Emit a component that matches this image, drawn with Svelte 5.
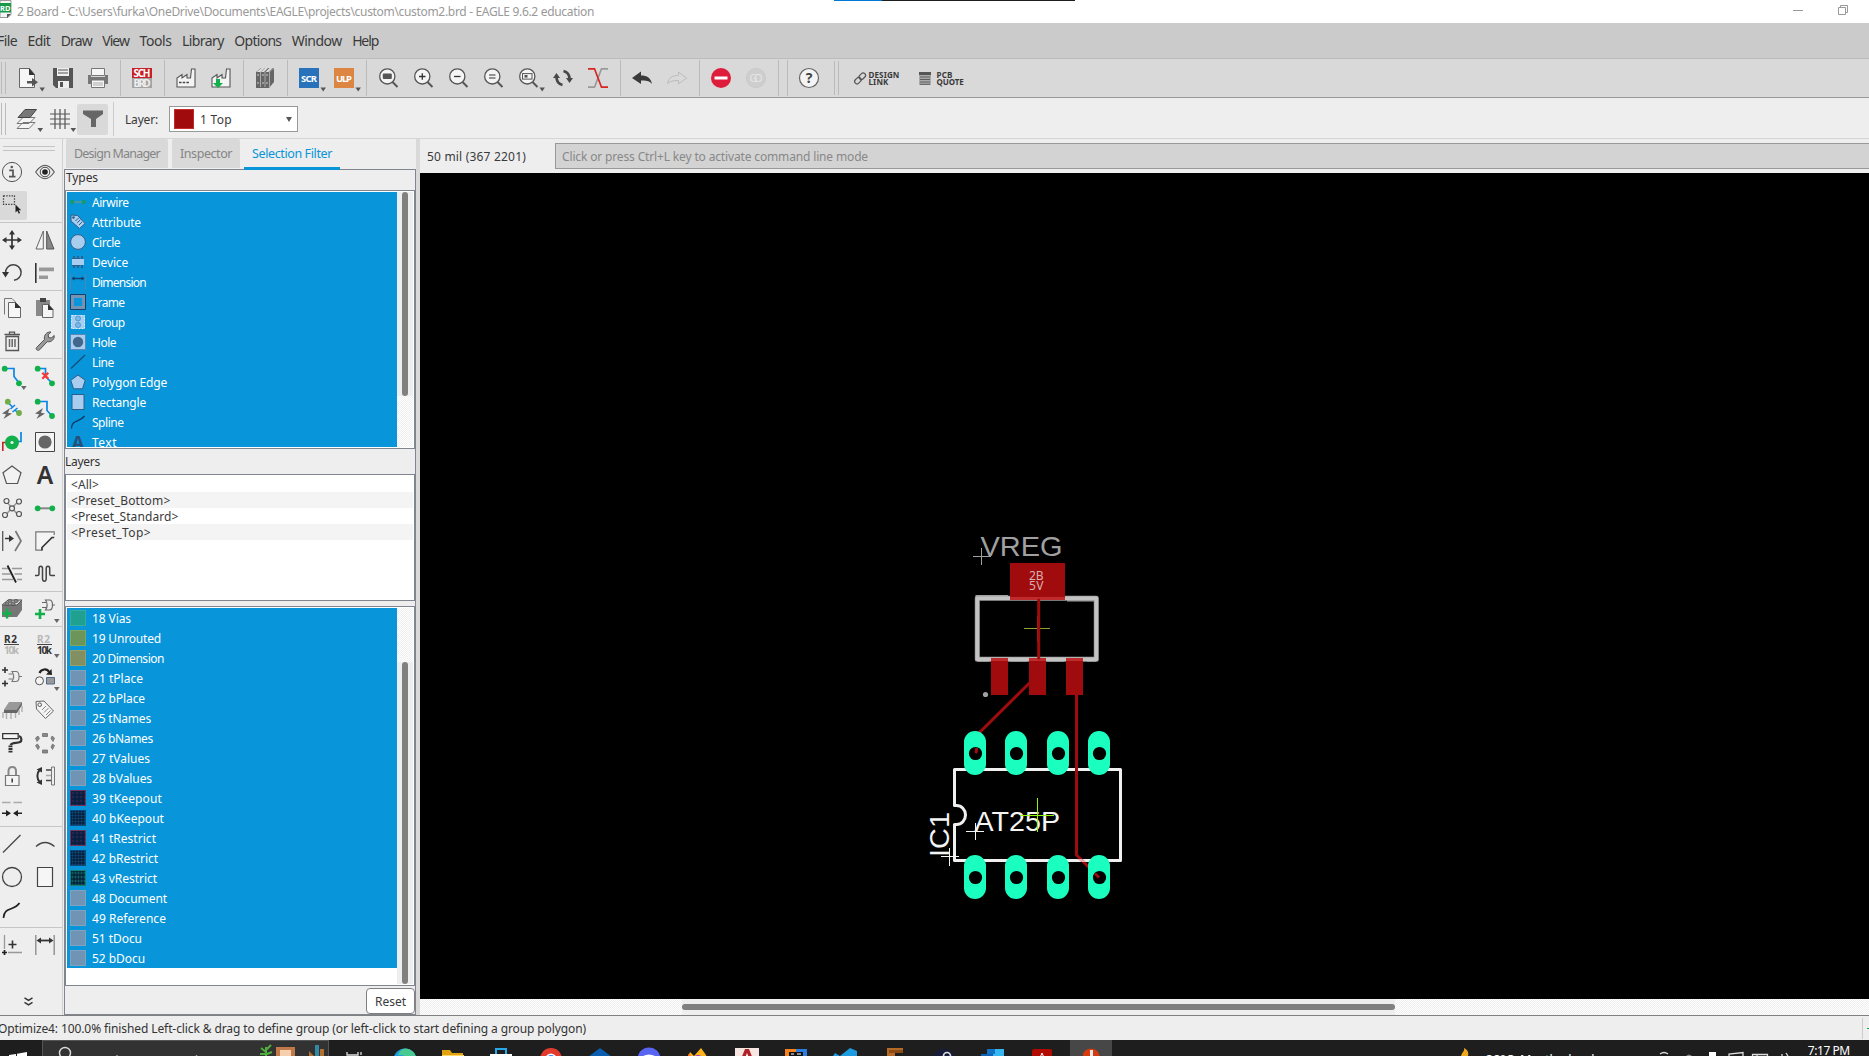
<script>
  // Spreads the letters of a label so that it fills a given width.
  function fit(node, width) {
    const chars = node.textContent.length;
    const range = document.createRange();
    range.selectNodeContents(node);
    const natural = range.getBoundingClientRect().width;
    node.style.letterSpacing = (width - natural) / chars + 'px';
  }

  const menu = [['File', 20], ['Edit', 23], ['Draw', 31], ['View', 27], ['Tools', 32], ['Library', 42], ['Options', 47], ['Window', 50], ['Help', 26]];

  const drop = '<path d="M21.5 19.5h5.4l-2.7 4z" fill="#555"/>';
  const lens = (inner) => `<path d="M14.5 14l5 5" stroke="#555" stroke-width="2"/><circle cx="9.3" cy="8.4" r="7.6" fill="#f4f4f4" stroke="#555" stroke-width="1.3"/>${inner}`;
  const factory = '<path d="M1 19V10l5-3.5V10l5-3.5V10h3.500l1-9h3.5V19z" fill="#f4f4f4" stroke="#555" stroke-width="1.100"/>';
  const F = 'font-family="Noto Sans, sans-serif" font-weight="bold" text-anchor="middle"';

  const tools = [
    '<path d="M1.500 .5h10l5 6v13h-15z" fill="#f6f6f6" stroke="#666"/><path d="M11 0l6 7h-6z" fill="#333"/><path d="M9 13h5v-3l6 4.200-6 4.200v-3H9z" fill="#555"/>' + drop,
    '<path d="M0 0h20v20H3l-3-3z" fill="#555"/><path d="M4 0h12v8H4z" fill="#eee"/><path d="M5 2h10M5 5h10" stroke="#888" stroke-width="1.500"/><path d="M5 13h11v7H5z" fill="#eee"/><path d="M7 14h3v5H7z" fill="#555"/>',
    '<path d="M3.500 .5h13v7h-13z" fill="#f6f6f6" stroke="#777"/><path d="M0 7h3v2h14V7h3v9H0z" fill="#777"/><path d="M3.500 12h13v7.500h-13z" fill="#f6f6f6" stroke="#777"/><path d="M5 15h10M5 17h10" stroke="#aaa"/>',
    '|',
    `<path d="M0 0h20v10H0z" fill="#c92027"/><path d="M0 10h20v10H0z" fill="#a4a4a4"/><text x="10" y="8.700" font-size="10" textLength="17" fill="#fff" ${F}>SCH</text><text x="10" y="18.700" font-size="10" textLength="17" fill="#f0f0f0" ${F}>BRD</text>`,
    '|',
    factory + '<path d="M3 14.500h10" stroke="#444" stroke-width="1.500" stroke-dasharray="2.500 1.200"/>',
    factory + '<path d="M5 11h4v4h3l-5 5-5-5h3z" fill="#12b04a"/>',
    '|',
    '<path d="M1 4l5-4h13v14l-5 6H1z" fill="#666"/><path d="M1.500 4l5-4h3l-4 4zM6 4l4-4h3l-4 4zM10.500 4l4-4h3l-4 4z" fill="#ddd"/><path d="M5.500 4v15M10 4v15M14.500 4v15M14 4l5-4" stroke="#bbb" stroke-width=".8"/><path d="M2 7h2M7 7h2M11 7h2M2 15h2M7 15h2M11 15h2" stroke="#ccc"/>',
    '|',
    `<path d="M0 0h20v20H0z" fill="#2871bb"/><text x="10" y="13.700" font-size="9.500" textLength="16" fill="#fff" ${F}>SCR</text>` + drop,
    `<path d="M0 0h20v20H0z" fill="#dd8542"/><text x="10" y="13.700" font-size="9.500" textLength="16" fill="#fff" ${F}>ULP</text>` + drop,
    '|',
    lens('<rect x="4.800" y="5.500" width="9" height="5.500" rx="1" fill="#555"/>'),
    lens('<path d="M6 8.500h6.500M9.300 5.300v6.400" stroke="#333" stroke-width="1.300"/>'),
    lens('<path d="M6 8.500h6.500" stroke="#333" stroke-width="1.300"/>'),
    lens('<path d="M6 7h6.500M6 10h6.500" stroke="#333" stroke-width="1.200"/>'),
    lens('<rect x="4.500" y="5.600" width="9.500" height="5.500" fill="none" stroke="#555"/><path d="M6.500 7h3v2.600h-3z" fill="#555"/>') + drop,
    '<path d="M3.500 9c0 4 2 7 6 8M16.500 11c0-4-2-7-6-8" fill="none" stroke="#484848" stroke-width="2.700"/><path d="M0 10l3.500-5L7 10zM20 10l-3.500 5-3.500-5z" fill="#484848"/>',
    '<path d="M0 19.200h6.500L13.500.8H20" fill="none" stroke="#999" stroke-width="1.700"/><path d="M0 .8h6.500l7 18.400H20" fill="none" stroke="#d8261f" stroke-width="1.700"/>',
    '|',
    '<path d="M0 10l9-6.500v4C15 7.500 19 10 20 16c-3-3.500-6-3.500-11-3.500V16z" fill="#3a3a3a"/>',
    '<path d="M19.500 10l-8-6v3.500C5.500 7.500 1.500 9.500.5 15.500c3-2.500 6-3 11-3V16z" transform="matrix(1 0 0 1 0 0)" fill="none" stroke="#bcbcbc"/>',
    '|',
    '<circle cx="10" cy="10" r="10" fill="#dd1d3b"/><path d="M3.500 8.500h13v3h-13z" fill="#fff"/>',
    `<circle cx="10" cy="10" r="9.600" fill="#cecece" stroke="#c6c6c6" stroke-width=".8"/><text x="10" y="14" font-size="10.500" fill="#e6e6e6" font-family="Noto Sans, sans-serif" text-anchor="middle" textLength="13">GO</text>`,
    '|', '|',
    `<circle cx="10" cy="10" r="9.500" fill="#f4f4f4" stroke="#666" stroke-width="1.200"/><text x="10" y="15" font-size="14" fill="#444" ${F}>?</text>`
  ];

  const dropP = '<path d="M19 20h5.600l-2.800 4z" fill="#666"/>';
  const G = '#12b04a';
  const dot = (x, y, c = G) => `<circle cx="${x}" cy="${y}" r="2.900" fill="${c}"/>`;
  const bolt = '<path d="M8 9L0 14.500l4 .7L1.500 20l8.500-5.500-4-.8z" fill="#666"/>';
  const LN = 'fill="none" stroke="#444" stroke-width="1.300"';
  const plus = (x, y, r, c, w) => `<path d="M${x - r} ${y}h${2 * r}M${x} ${y - r}v${2 * r}" stroke="${c}" stroke-width="${w}"/>`;

  const palette = [
    ['<circle cx="10" cy="10" r="9.600" fill="none" stroke="#555"/><path d="M7.200 8.300h3.800v6M7 14.700h6.500" fill="none" stroke="#555" stroke-width="1.700"/><circle cx="9.800" cy="5" r="1.300" fill="#555"/>',
     '<path d="M.7 10Q10-3.500 19.300 10Q10 23.500.7 10z" fill="none" stroke="#555" stroke-width="1.100"/><circle cx="10" cy="10" r="4.800" fill="none" stroke="#444"/><circle cx="10" cy="10" r="2.800" fill="#222"/>'],
    ['sel', ''],
    '-',
    ['<path d="M10 2v16M2 10h16" stroke="#333" stroke-width="1.700"/><path d="M10 0l3 4.500H7zM10 20l3-4.500H7zM0 10l4.500-3v6zM20 10l-4.500-3v6z" fill="#333"/>',
     '<path d="M8.300 1v18H1z" fill="#f2f2f2" stroke="#666"/><path d="M11.700 1v18H19z" fill="#888" stroke="#555"/>'],
    ['<path d="M3.500 10a7.800 7.800 0 1 1 8.500 7.300" fill="none" stroke="#444" stroke-width="1.500"/><path d="M0 9h7l-3.500 5.500z" fill="#333"/>',
     '<path d="M.8 0v20" stroke="#333" stroke-width="1.600"/><path d="M4 4.500h15v3.700H4zM4 12.500h9v3.500H4z" fill="#999"/>'],
    '-',
    ['<path d="M2.500 16.500V.5h7.500l3 3v3" fill="none" stroke="#777"/><path d="M6.500 4.500h7l5 5v10h-12z" fill="#f6f6f6" stroke="#666"/><path d="M13 4l6 6h-6z" fill="#333"/>',
     '<path d="M1 2h14v16H1z" fill="#888"/><path d="M5 0h6v4H5z" fill="#444"/><path d="M7.500 6.500h6l4.500 5v8H7.500z" fill="#f6f6f6" stroke="#666"/><path d="M13 6l5.500 6H13z" fill="#333"/>'],
    ['<path d="M4 5.500h12.500v14H4zM2.500 3.500H18M7.500 3.500V1.200h5v2.300" fill="none" stroke="#555" stroke-width="1.300"/><path d="M7.500 8v8M10.200 8v8M13 8v8" stroke="#666" stroke-width="1.500"/>',
     '<path d="M1.500 16.500l8-8c-1-4 2-8 6.500-7.500l-2.800 3 .5 2.500 2.500.5 3-2.500c.5 4-3 7-7 6.200l-7.500 8c-2 1.500-4.500-.2-3.200-2.200z" fill="#999" stroke="#555"/>'],
    '-',
    [`<path d="M3 2.500h9v8l5.500 7" fill="none" stroke="#0a87e6" stroke-width="1.700"/>${dot(2.700, 2.700)}${dot(17, 17.300)}` + dropP,
     `<path d="M3 2.500h7.500v8l6 6" fill="none" stroke="#0a87e6" stroke-width="1.700"/>${dot(2.700, 2.700)}${dot(17, 17.300)}<path d="M7.300 6.800l6 6M13.300 6.800l-6 6" stroke="#fb3434" stroke-width="2.200"/>`],
    [`<path d="M6 3.500l5 5M13 11l4 4M8.500 10l4.500-4M10.500 13l5-4" fill="none" stroke="#0a87e6" stroke-width="1.600"/>${dot(5.800, 2.700, '#70ac48')}${dot(17, 14, '#70ac48')}${bolt}`,
     `<path d="M3 2.500h9v9l5 5.500" fill="none" stroke="#0a87e6" stroke-width="1.700"/>${dot(2.700, 2.700)}${dot(17, 17)}${bolt}`],
    ['<path d="M.8 19V10.500H4" fill="none" stroke="#c92027" stroke-width="1.600"/><path d="M15 9.500h4V0" fill="none" stroke="#0a87e6" stroke-width="1.700"/><circle cx="10" cy="10.500" r="7" fill="#12b04a"/><circle cx="10" cy="10.500" r="1.600" fill="#eee"/>',
     '<path d="M.5 .5h19v19H.5z" fill="#f4f4f4" stroke="#444"/><circle cx="10" cy="10" r="6.600" fill="#666"/>'],
    ['<path d="M10 1l9 6.800L15.500 18.500h-11L1 7.800z" fill="#f2f2f2" stroke="#555" stroke-width="1.200"/>',
     '<path d="M10 1" /><text x="10" y="18.700" font-size="24.500" fill="#333" font-family="Noto Sans, sans-serif" font-weight="600" text-anchor="middle" textLength="16.500" lengthAdjust="spacingAndGlyphs">A</text>'],
    ['<path d="M4 3l12 14M16.500 3L3.500 17" stroke="#999" stroke-width="1.600"/><g fill="#eee" stroke="#555" stroke-width="1.200"><circle cx="4.500" cy="3" r="2.500"/><circle cx="17" cy="3.500" r="2.500"/><circle cx="3" cy="17" r="2.500"/><circle cx="17" cy="16" r="2.500"/><circle cx="10" cy="10.300" r="2.500"/></g>',
     `<path d="M2 10.300h16" stroke="#888" stroke-width="2"/>${dot(2.700, 10.300)}${dot(17.300, 10.300)}`],
    ['<path d="M.7 0v20" stroke="#555" stroke-width="1.300"/><path d="M13.500 0l5.500 10-6 10" fill="none" stroke="#777" stroke-width="1.700"/><path d="M3 7.500h5" stroke="#333" stroke-width="1.500"/><path d="M7 4l5 3.500L7 11z" fill="#333"/>',
     '<path d="M.8 .8h18.400v3L6 19.200H.8z" fill="#f4f4f4"/><path d="M19.200 4V.8H.8v18.400H7" fill="none" stroke="#777" stroke-width="1.200"/><path d="M19.200 6.500H17L7 16.500v3" fill="none" stroke="#333" stroke-width="1.700"/>'],
    ['<path d="M0 4.500h6M0 10h8.500M0 15.500h11M10 4.500h10M12.500 10H20M15 15.500h5" stroke="#999" stroke-width="1.500"/><path d="M5.500 1.500l8.500 17" stroke="#222" stroke-width="1.800"/>',
     '<path d="M0 11.500h2.500c1 0 1.500-.5 1.500-1.500V4.500c0-3 3.500-3 3.500 0v10c0 3.500 3.700 3.500 3.700 0v-10c0-3 3.500-3 3.500 0V10c0 1 .5 1.500 1.500 1.500H20" fill="none" stroke="#444" stroke-width="1.500"/>'],
    '-',
    ['<path d="M0 6l6-5h14v10l-5 7H0z" fill="#777"/><path d="M0 6l6-5h14l-5 5z" fill="#ddd" stroke="#555"/><g fill="#888" stroke="#444" stroke-width=".7"><ellipse cx="8" cy="2" rx="2.200" ry="1.500"/><ellipse cx="14" cy="2" rx="2.200" ry="1.500"/><ellipse cx="5" cy="5" rx="2.200" ry="1.500"/><ellipse cx="11" cy="5" rx="2.200" ry="1.500"/></g>' + plus(5, 14.500, 5, G, 2.600),
     '<path d="M10.500 1h4c3 0 3 3 3 5s0 5-3 5h-4c2-3 2-7 0-10zM7 3.500h4M7 8.500h4M17.500 6H20" fill="none" stroke="#666" stroke-width="1.200"/>' + plus(5, 15, 5, G, 2.600) + dropP],
    '-',
    [`<text x="8.500" y="8.500" font-size="10" fill="#333" textLength="13" ${F}>R2</text><path d="M2 10.500h15" stroke="#444"/><text x="9.500" y="19.500" font-size="10" fill="#b8b8b8" textLength="15" ${F}>10k</text>`,
     `<text x="8.500" y="8.500" font-size="10" fill="#b8b8b8" textLength="13" ${F}>R2</text><path d="M2 10.500h15" stroke="#444"/><text x="9.500" y="19.500" font-size="10" fill="#333" textLength="15" ${F}>10k</text>` + dropP],
    ['<path d="M10 4.500h4c3 0 3 3 3 5s0 5-3 5h-4c2-3 2-7 0-10zM6.500 7h4M6.500 12h4M17 9.500h3" fill="none" stroke="#777" stroke-width="1.100"/>' + plus(3, 3, 3, '#333', 1.600) + plus(3, 16.500, 3, '#333', 1.600),
     '<path d="M4.500 6C6 2 12 1 14 5" fill="none" stroke="#222" stroke-width="2.200"/><path d="M11 7.500l6 .5-.5-6z" fill="#222"/><circle cx="4.500" cy="13.800" r="4" fill="#f4f4f4" stroke="#555"/><path d="M11.500 10.500h8v6.500h-8z" fill="#999" stroke="#4d6b86"/>' + dropP],
    ['<path d="M7 2h13l-4 7.500H2z" fill="#999"/><path d="M2 9.500h13l5-7.500v3l-5 8H2z" fill="#666"/><path d="M1 12v6M4.500 13v6M9 13v6M13.500 13v5M17 10v5M20 6v6" stroke="#b0b0b0" stroke-width="1.400"/>',
     '<path d="M1 1.500l8-.5 9.500 10-8 7.500L1.500 9z" fill="#f4f4f4" stroke="#666"/><circle cx="4.700" cy="4.700" r="1.800" fill="none" stroke="#555"/><path d="M7 10l4-4M9 12.500l4.500-4.500M11 15l4.500-4.500" stroke="#888"/>'],
    ['<path d="M.7 .7h15.500v5H.7z" fill="#f4f4f4" stroke="#333" stroke-width="1.300"/><path d="M17 3c3 1 3 5 1 6-3 1.500-8 0-9.500 3" fill="none" stroke="#333" stroke-width="2.200"/><path d="M8.500 12.500v7.500" stroke="#333" stroke-width="4" stroke-dasharray="1.800 .8"/>',
     '<g fill="#888" stroke="#666" stroke-width=".7"><path d="M7.500 .5h5v3h-5zM7.500 17h5v3h-5zM.5 5l2.500-2 1.500 2.500-2.500 3zM17 3l2.500 2-1.500 3.500-2-3zM.5 12.500l2-1.500 2 3-1.500 2.500zM19.500 12.500l-2-1.500-1.500 3 1.500 2.500z"/></g>'],
    ['<path d="M3.500 9.500h13.500v10H3.500z" fill="#f4f4f4" stroke="#777" stroke-width="1.200"/><path d="M6.500 9V5c0-5.500 7.500-5.500 7.500 0v4" fill="none" stroke="#888" stroke-width="2"/><path d="M10.200 12.500v4" stroke="#444" stroke-width="1.600"/>',
     '<path d="M5 3.500c-3.500 3.500-3.500 9.500 0 13" fill="none" stroke="#333" stroke-width="2"/><path d="M1.500 3.500L7 1v5.500zM1.500 16.500L7 19v-5.500z" fill="#333"/><path d="M16.500 1H19.500v18h-3z" fill="#eee" stroke="#777"/><path d="M11 4h5M11 14.500h5" stroke="#444" stroke-width="1.500"/><path d="M11 9.500h5" stroke="#aaa" stroke-width="1.500"/>'],
    ['<path d="M0 3.500h8.500M11.500 3.500H20" stroke="#aaa" stroke-width="1.600"/><path d="M0 14.200h5M15 14.200h5" stroke="#222" stroke-width="1.600"/><path d="M4 11l5 3.200-5 3.200zM16 11l-5 3.200 5 3.200z" fill="#222"/>', ''],
    '-',
    [`<path d="M1 18.500L18.500 1" ${LN}/>`, `<path d="M1 12.500Q10 4.500 19.500 12.500" ${LN}/>`],
    [`<circle cx="10" cy="10" r="9.500" ${LN}/>`, '<path d="M2.500 .5h15v19h-15z" fill="#f6f6f6" stroke="#444" stroke-width="1.200"/>'],
    ['<path d="M1.500 18C2 6 12 11.500 17.500 3" fill="none" stroke="#222" stroke-width="1.700"/>', ''],
    '-',
    ['<path d="M2.500 0v14M6 17.500h14" stroke="#999" stroke-width="1.300"/>' + plus(2.500, 17.500, 2.500, '#222', 1.700) + plus(10.500, 9.500, 4, '#333', 1.600),
     '<path d="M.8 0v20M19.200 0v20" stroke="#888" stroke-width="1.300"/><path d="M4 5.500h12" stroke="#333" stroke-width="1.800"/><path d="M1.500 5.500L6 2.500v6zM18.500 5.500L14 2.500v6z" fill="#333"/>']
  ];
  const selectIcon = '<path d="M1.500 .8h11v8.500h-11z" fill="none" stroke="#444" stroke-width="1.200" stroke-dasharray="1.500 1.200"/><path d="M13.500 9.500v8l1.800-1.700 1.500 3 1.300-.7-1.500-2.800h2.600z" fill="#222"/>';

  const P = 'fill="#a9cdee" stroke="#2f5d8a"';
  const types = [
    ['Airwire', 36.500, '<path d="M3 8h10" stroke="#6b9a8a" stroke-width="1.300"/><circle cx="2.300" cy="8" r="2.200" fill="#159a6e"/><circle cx="13.700" cy="8" r="2.200" fill="#159a6e"/>'],
    ['Attribute', 49, `<path d="M1 1l6.500.5 7.500 8-5.500 5L1 7z" ${P}/><circle cx="3.500" cy="3.500" r="1.300" fill="#2f5d8a"/><path d="M5.500 7l3-3M7.300 8.800l3-3M9 11l3-3" stroke="#2f5d8a"/>`],
    ['Circle', 28, `<circle cx="8" cy="8" r="7.400" ${P}/>`],
    ['Device', 36, '<path d="M2 5h12v6H2z" fill="#a9cdee"/><path d="M4 2v3M8 2v3M12 2v3M4 11v3M8 11v3M12 11v3" stroke="#2f5d8a" stroke-width="1.800"/><path d="M2 4.500h12M2 11.500h12" stroke="#2f5d8a" stroke-dasharray="2 1"/>'],
    ['Dimension', 54, '<path d="M.5 0v16M15.500 0v16" stroke="#4f86b4"/><path d="M2 4.500h12" stroke="#123f6b" stroke-width="1.400"/><path d="M1.500 4.500l3-2v4zM14.500 4.500l-3-2v4z" fill="#123f6b"/>'],
    ['Frame', 32.500, '<path d="M2.200 2.200h11.600v11.600H2.200z" fill="none" stroke="#7594b5" stroke-width="3.500"/><path d="M.5 .5h15v15H.5z" fill="none" stroke="#183f68"/>'],
    ['Group', 32.500, '<path d="M1.500 1.500h13v13h-13z" fill="#a9cdee" stroke="#e6f2fc" stroke-dasharray="2 1"/><circle cx="8" cy="4.500" r="2.500" fill="#7bb8ea" stroke="#4f9bd6"/><circle cx="8" cy="11" r="2.500" fill="#7bb8ea" stroke="#4f9bd6"/>'],
    ['Hole', 24, '<path d="M.5 .5h15v15H.5z" fill="#a9cdee" stroke="#5c87b2"/><circle cx="8" cy="8" r="5.200" fill="#42678c"/>'],
    ['Line', 22, '<path d="M1 14.500L15 1" stroke="#174a78" stroke-width="1.200"/>'],
    ['Polygon Edge', 75, `<path d="M8 1l7.200 5.300-2.700 8.500h-9L.8 6.300z" ${P}/>`],
    ['Rectangle', 54, `<path d="M2 .5h12v15H2z" ${P}/>`],
    ['Spline', 31.500, '<path d="M1.500 14.500C2 5 9 9 14.500 2" fill="none" stroke="#0e3860" stroke-width="1.300"/>'],
    ['Text', 25, `<text x="8" y="14.500" font-size="18" fill="#24507c" ${F}>A</text>`]
  ];

  const presets = [['<All>', 28], ['<Preset_Bottom>', 99.500], ['<Preset_Standard>', 107.500], ['<Preset_Top>', 80]];

  const layers = [
    ['18 Vias', 39, 'vias'], ['19 Unrouted', 69, 'unrouted'], ['20 Dimension', 72, 'dim'], ['21 tPlace', 51, ''], ['22 bPlace', 53, ''], ['25 tNames', 59, ''],
    ['26 bNames', 61, ''], ['27 tValues', 58, ''], ['28 bValues', 60, ''], ['39 tKeepout', 70, 'dark red'], ['40 bKeepout', 72, 'dark'], ['41 tRestrict', 64, 'dark red'],
    ['42 bRestrict', 66, 'dark'], ['43 vRestrict', 65, 'dark green'], ['48 Document', 75, ''], ['49 Reference', 74, ''], ['51 tDocu', 50, ''], ['52 bDocu', 53, '']
  ];

  const padX = [975, 1016, 1058, 1099];

  // Taskbar icons; only their upper edge shows above the bottom of the screen.
  const tasks = [
    '<path d="M5 4v3h11V4M19 4v3M19 9v3" fill="none" stroke="#ddd" stroke-width="1.300"/>',
    '<g transform="translate(2 0)"><circle cx="12" cy="12" r="11.500" fill="#1b9de2"/><path d="M12 .5A11.500 11.500 0 0 1 23.500 12H14c0-4-5-6-9-4.500C7 2.500 9 .7 12 .5z" fill="#47c98f"/></g>',
    '<path d="M2 2h8l2 3h11v15H2z" fill="#e0a210"/><path d="M2 7h22v12H2z" fill="#ffd75e"/>',
    '<path d="M7 6V1h10v5" fill="none" stroke="#28a8ea" stroke-width="2"/><path d="M1 6h22v14H1z" fill="#fff"/>',
    '<circle cx="13" cy="11" r="11" fill="#e23b2e"/><circle cx="13" cy="11" r="5.500" fill="#fff"/><circle cx="13" cy="11" r="4" fill="#4285f4"/>',
    '<path d="M12 0l12 9v10H0V9z" fill="#0b5db0"/>',
    '<circle cx="12" cy="11" r="11.500" fill="#5865f2"/><path d="M6 8q6-3 12 0v8H6z" fill="#fff"/>',
    '<path d="M1 12L4 4l4 4 7-8 5 7 3 8z" fill="#ffb31a"/><path d="M2 12V6l5 3z" fill="#ff6a2b"/><circle cx="12" cy="12" r="5" fill="#9340d5"/>',
    '<path d="M0 0h24v20H0z" fill="#f6e5e0"/><path d="M10 1h4l6 15H4z" fill="#b02027"/><path d="M12 5l2 5h-4z" fill="#fff"/>',
    '<path d="M1 1h22v20H1z" fill="#d63c8c"/><path d="M1 1h11v7H1z" fill="#f7811d"/><path d="M12 1h11v12H12z" fill="#2b7de0"/><path d="M5 4h14v14H5z" fill="#111"/><path d="M7 6h3M13 6h4" stroke="#fff"/>',
    '<path d="M17 0l7 3v16h-7L0 8l2-3 5 3z" fill="#1e9ae0"/>',
    '<path d="M4 0h16v5h-8v12H4z" fill="#b56a26"/><path d="M6 2h14v3H6z" fill="#8c4a15"/>',
    '<circle cx="12" cy="12" r="11" fill="#171c3c"/><circle cx="15" cy="8" r="3.500" fill="none" stroke="#ddd" stroke-width="1.700"/>',
    '<path d="M6 1h17v15H6z" fill="#37b7f2"/><path d="M6 1h8v5H6z" fill="#1272c4"/><path d="M0 6h12v12H0z" fill="#0f62b5"/>',
    '<path d="M4 1h16q2 0 2 2v16H2V3q0-2 2-2z" fill="#b30b00"/><path d="M12 5l-3 7M12 5l3 7" stroke="#fff"/>',
    '<path d="M4 6C6-1 18-1 20 6l2 8H4z" fill="#d53a0e"/><path d="M11 2h3v12h-3z" fill="#e8e8e8"/>'
  ];
</script>

<div class="screen">
  <header class="title">
    <svg class="logo" viewBox="0 0 12 18"><path d="M0 .5h11v14l-3 3H0z" fill="#f4f4f4" stroke="#999" /><path d="M0 3h11v9.500H0z" fill="#169a48" /><text x="10.500" y="10.500" font-size="7.500" font-family="Noto Sans, sans-serif" font-weight="bold" fill="#fff" text-anchor="end">BRD</text><path d="M7 14h4l-4 4z" fill="#555" /></svg>
    <span class="name" use:fit={577}>2 Board - C:\Users\furka\OneDrive\Documents\EAGLE\projects\custom\custom2.brd - EAGLE 9.6.2 education</span>
    <div class="peek"></div>
    <svg class="winbtns" viewBox="0 0 60 20"><path d="M0 7.500h10M45.500 4.500h7v7h-7zM47.500 4.500v-2h7v7h-2" fill="none" stroke="#999" /></svg>
  </header>

  <nav class="menu">
    {#each menu as [label, w]}<span class="item" use:fit={w}>{label}</span>{/each}
  </nav>

  <div class="tools">
    <i class="grip"></i>
    {#each tools as t}
      {#if t === '|'}<i class="sep"></i>{:else}<div class="cell"><svg viewBox="0 0 20 20">{@html t}</svg></div>{/if}
    {/each}
    <i class="grip end"></i>
    <div class="link">
      <svg viewBox="0 0 12 12"><g fill="none" stroke="#555" stroke-width="1"><rect x="-3" y="-2" width="6" height="4" rx="2" transform="translate(8.300 3.700) rotate(-45) scale(1.200)" /><rect x="-3" y="-2" width="6" height="4" rx="2" transform="translate(3.900 8.100) rotate(-45) scale(1.200)" /></g></svg>
      <div><b use:fit={31}>DESIGN</b><b use:fit={20}>LINK</b></div>
    </div>
    <div class="link quote">
      <svg viewBox="0 0 12 13"><path d="M0 0h12v13H0z" fill="#aaa" /><path d="M0 0h12v3H0z" fill="#555" /><path d="M1 5h10M1 7.500h10M1 10h10M1 12.300h10" stroke="#555" stroke-width=".9" /></svg>
      <div><b use:fit={16}>PCB</b><b use:fit={27}>QUOTE</b></div>
    </div>
  </div>

  <div class="options">
    <i class="grip"></i>
    <div class="opt first"><svg viewBox="0 0 20 20"><path d="M0 19.500l6-6h12l-6 6zM0 14.500l6-6h12l-6 6z" fill="#f4f4f4" stroke="#777" /><path d="M1 8.500L8 .5h11.500l-6.500 8z" fill="#777" stroke="#444" /><path d="M20.500 19h5.600l-2.800 4z" fill="#555" /></svg></div>
    <div class="opt"><svg viewBox="0 0 20 20"><path d="M5 0v20M10 0v20M15 0v20M0 5h20M0 10h20M0 15h20" stroke="#555" stroke-width="1.200" /><path d="M20.500 19h5.600l-2.800 4z" fill="#555" /></svg></div>
    <div class="opt on"><svg viewBox="0 0 20 20"><path d="M0 1.500h20v3.500l-7 5v8H8v-8L0 5z" fill="#666" /></svg></div>
    <i class="bar"></i>
    <span class="layerlabel" use:fit={33}>Layer:</span>
    <div class="combo"><i class="swatch"></i><span use:fit={32}>1 Top</span><svg viewBox="0 0 6 5"><path d="M0 0h6L3 5z" fill="#555" /></svg></div>
  </div>

  <main>
    <aside class="palette">
      <i class="hgrip"></i>
      {#each palette as row}
        {#if row === '-'}
          <i class="rule"></i>
        {:else}
          <div class="prow">
            <div class="pc" class:sel={row[0] === 'sel'}><svg viewBox="0 0 20 20">{@html row[0] === 'sel' ? selectIcon : row[0]}</svg></div>
            <div class="pc"><svg viewBox="0 0 20 20">{@html row[1]}</svg></div>
          </div>
        {/if}
      {/each}
      <svg class="more" viewBox="0 0 9 9"><path d="M.5 .8l4 2.500 4-2.500M.5 5.300l4 2.500 4-2.500" fill="none" stroke="#333" stroke-width="1.400" /></svg>
    </aside>

    <section class="panel">
      <div class="tabs">
        <div class="tab dm"><span use:fit={86}>Design Manager</span></div>
        <div class="tab insp"><span use:fit={52}>Inspector</span></div>
        <div class="tab active"><span use:fit={80}>Selection Filter</span></div>
      </div>
      <div class="body">
        <div class="caption"><span use:fit={32}>Types</span></div>
        <div class="list typelist">
          <div class="rows">
            {#each types as [name, w, icon]}
              <div class="row"><svg viewBox="0 0 16 16">{@html icon}</svg><span use:fit={w}>{name}</span></div>
            {/each}
          </div>
          <div class="track"><div class="used ttop"><i></i></div></div>
        </div>
        <div class="caption mid"><span use:fit={35}>Layers</span></div>
        <div class="list presets">
          {#each presets as [name, w]}<div class="preset"><span use:fit={w}>{name}</span></div>{/each}
        </div>
        <div class="list layerlist">
          <div class="rows">
            {#each layers as [name, w, kind]}
              <div class="row"><i class="chip {kind}"></i><span use:fit={w}>{name}</span></div>
            {/each}
          </div>
          <div class="track"><div class="used tbot"><i></i></div></div>
        </div>
        <div class="foot"><button><span use:fit={31}>Reset</span></button></div>
      </div>
    </section>

    <section class="work">
      <div class="command">
        <span class="coord"><span use:fit={99}>50 mil (367 2201)</span></span>
        <div class="input"><span use:fit={306}>Click or press Ctrl+L key to activate command line mode</span></div>
      </div>
      <svg class="board" viewBox="420 173 1449 826" font-family="Liberation Sans, Arial, sans-serif">
        <g fill="none" stroke-linejoin="round">
          <path d="M977.300 598.300H1096.300V659.300H977.300z" stroke="#a0a0a0" stroke-width="5" />
          <path d="M975.500 596h32.500M1067 600.500h29M978 660.800h11M1010 660.800h17M1047 660.800h17M1087 660.800h9" stroke="#a0a0a0" stroke-width="2" />
          <path d="M977.300 598.300H1096.300V659.300H977.300z" stroke="#c3c3c3" stroke-width="3.400" />
          <path d="M954.500 769.500H1120.500V860.500H954.500V824.500h2a9 9.500 0 0 0 0-19h-2z" stroke="#f0f0f0" stroke-width="3" />
        </g>
        <path d="M1010 563h55v37h-55zM991 658h17v37h-17zM1029 658h17v37h-17zM1066 658h17v37h-17z" fill="#a00b0e" />
        <path d="M1010 597h55v3h-55zM991 658h17v3h-17zM1029 658h17v3h-17zM1066 658h17v3h-17z" fill="#c02b2e" />
        <path d="M1024 628.500h26" stroke="#93a02c" />
        <path d="M1037.500 616v26" stroke="#b05020" />
        <path d="M1038.700 600v58M1038 674.500L979 733M1076.500 690v165l22.500 22.500" fill="none" stroke="#a00b0e" stroke-width="3" stroke-linecap="round" />
        <path d="M1077 859l5 3h4l-4-3z" fill="#f0b4b4" />
        {#each padX as x}
          <g fill="#1affc0"><rect x={x - 11} y="731" width="22" height="44" rx="11" /><rect x={x - 11} y="855" width="22" height="44" rx="11" /></g>
          <circle cx={x + 0.5} cy="753.500" r="6.600" /><circle cx={x + 0.5} cy="877.500" r="6.600" />
        {/each}
        <path d="M976.500 748v3l-1 2M1095 873.500l4 4" fill="none" stroke="#a00b0e" stroke-width="3" />
        <circle cx="985.500" cy="694.500" r="2.600" fill="#a0a0a0" />
        <g fill="#a0a0a0">
          <text x="980.500" y="555.500" font-size="27.500" textLength="82" lengthAdjust="spacingAndGlyphs">VREG</text>
          <path d="M973 556h18v1h-18zM981 548h1v17h-1z" />
        </g>
        <g fill="#d8b0b0" font-size="12" font-family="Noto Sans, sans-serif">
          <text x="1029" y="580" textLength="14.500">2B</text><text x="1029" y="590" textLength="14.500">5V</text>
        </g>
        <g fill="#f4f4f4">
          <text x="974.500" y="830.500" font-size="27.500" textLength="85.500" lengthAdjust="spacingAndGlyphs">AT25P</text>
          <text transform="translate(948.500 857) rotate(-90)" font-size="27.500" textLength="45" lengthAdjust="spacingAndGlyphs">IC1</text>
          <path d="M966 831h18v1h-18zM975 823h1v17h-1zM941 856h18v1h-18zM949 848h1v18h-1z" />
        </g>
        <path d="M1020 815.500h34M1037.500 798v34" stroke="#92f50a" />
      </svg>
      <div class="hscroll"><div><i></i></div></div>
    </section>
  </main>

  <div class="status"><span use:fit={588}>Optimize4: 100.0% finished Left-click &amp; drag to define group (or left-click to start defining a group polygon)</span><i></i><b></b></div>

  <footer>
    <div class="start"><svg viewBox="0 0 18 18"><path d="M0 3l7-1v7H0zM8 1.800L18 0v9H8z" fill="#fff" /></svg></div>
    <div class="search">
      <svg viewBox="0 0 286 16"><circle cx="22" cy="13" r="5.500" fill="none" stroke="#ddd" stroke-width="1.400" />
        <text x="40" y="24.500" font-size="13" font-family="Noto Sans, sans-serif" fill="#bbb">Type here to search</text>
        <path d="M223 16V7M223 12l-5-4M223 10l5-5M223 14l-6 0M224 14l5-2" stroke="#4fae3c" stroke-width="2" />
        <path d="M233 7h19v9h-19z" fill="#c2794a" /><path d="M237 10h11v6h-11z" fill="#f6cfae" />
        <path d="M272 5h4v11h-4z" fill="#3389a5" /><path d="M266 11l5 5h-5zM277 9h4v7h-4z" fill="#b07030" />
      </svg>
    </div>
    {#each tasks as t, i}
      <div class="task" class:live={i === tasks.length - 1}><svg viewBox="0 0 24 24">{@html t}</svg></div>
    {/each}
    <div class="tray">
      <svg viewBox="0 0 340 16">
        <path d="M1 16C2 12 5 11 4 8c4 2 5 5 4 8z" fill="#f0a81c" />
        <text x="26" y="24" font-size="12.500" font-family="Noto Sans, sans-serif" fill="#fff">38°C &#160;Mostly cloudy</text>
        <g fill="none" stroke="#ddd" stroke-width="1.300"><path d="M200 14q4-3 8 0M269 16v-2l14-1.500v3.500M292.500 16v-1.500h15v1.500M297 14v2" /><path d="M322 14v2M326 13l2 3" /></g>
        <path d="M226 16q3-3 6 0z" fill="#888" /><path d="M249 12h7v4h-7z" fill="#fff" />
      </svg>
    </div>
    <span class="clock" use:fit={42}>7:17 PM</span>
  </footer>
</div>

<style>
  :global(body) { margin: 0; overflow: hidden; }
  .screen { width: 1869px; height: 1056px; display: flex; flex-direction: column; overflow: hidden; background: #eee; color: #3a3a3a; font: 12px/16px "Noto Sans", "Open Sans", sans-serif; white-space: nowrap; box-sizing: border-box; }
  .screen :global(svg) { overflow: visible; display: block; flex: none; }
  i { display: block; flex: none; box-sizing: border-box; }
  span { flex: none; }
  button { font: inherit; color: inherit; }

  .title { height: 23px; background: #fff; color: #999; display: flex; align-items: flex-start; flex: none; }
  .logo { width: 12px; height: 18px; margin-right: 5px; }
  .name { margin-top: 4px; width: 577px; }
  .peek { width: 241px; height: 1px; margin-left: 240px; background: linear-gradient(90deg, #0078d7 48px, #1e1e1e 48px); }
  .winbtns { width: 60px; height: 20px; margin: 3px 0 0 718px; }

  .menu { height: 35px; background: #cbcbcb; border-bottom: 1px solid #bbb; display: flex; align-items: center; font-size: 14px; flex: none; padding-left: 0; }
  .item { margin-right: 10.400px; }
  .item:first-child { margin-left: -3px; }

  .tools { height: 38px; flex: none; background: #d9d9d9; border-bottom: 1px solid #999; display: flex; align-items: center; }
  .grip { width: 5px; height: 32px; margin: 0 4.500px 0 1px; border: solid #bbb; border-width: 0 1px; }
  .cell { width: 35px; height: 20px; display: flex; justify-content: center; }
  .cell svg, .opt svg, .pc svg { width: 20px; height: 20px; }
  .sep { width: 9px; height: 36px; background: linear-gradient(#bbb, #bbb) 4px 0 / 1px 100% no-repeat; }
  .grip.end { margin: 0 0 0 7px; height: 34px; }
  .link { display: flex; align-items: center; margin-left: 15px; gap: 3px; height: 20px; }
  .link svg { width: 12px; height: 13px; }
  .link b { display: block; font: bold 8px/7.500px "Noto Sans", sans-serif; width: max-content; }
  .quote { margin-left: 19px; gap: 6px; }

  .options { height: 38px; padding-top: 2px; flex: none; border-bottom: 1px solid #d5d5d5; display: flex; align-items: center; }
  .opt { width: 31px; height: 31px; display: grid; place-items: center; margin-right: 2px; }
  .opt.on { background: #d9d9d9; border-radius: 2px; margin-right: 5px; }
  .options .first { margin-left: 0.500px; }
  .bar { width: 1px; height: 34px; background: #ccc; margin-right: 11px; }
  .layerlabel { width: 33px; margin: 2px 11px 0 0; }
  .combo { width: 129px; height: 26px; box-sizing: border-box; border: 1px solid #999; background: #fff; display: flex; align-items: center; padding: 0 5px 0 4px; }
  .combo span { padding-top: 1px; }
  .swatch { width: 20px; height: 20px; background: #a00b0e; border: 1px solid #c62a2c; margin-right: 6px; }
  .combo svg { width: 6px; height: 5px; margin-left: auto; }

  main { height: 876px; flex: none; display: flex; }
  .palette { width: 63px; flex: none; overflow: hidden; border-right: 1px solid #d0d0d0; box-sizing: border-box; }
  .hgrip { margin: 7px 0 5px 3px; width: 52px; height: 5px; border: solid #c4c4c4; border-width: 1px 0; }
  .prow { display: flex; gap: 1px; height: 33px; margin-left: -4px; }
  .pc { width: 32px; height: 33px; box-sizing: border-box; padding: 6px; }
  .pc.sel { width: 31px; margin: 2px 1px 2px 0; height: 29px; padding: 4px 6px; background: #d9d9d9; border-radius: 2px; }
  .rule { height: 1px; margin-bottom: 1px; width: 62px; background: #c6c6c6; }
  .more { width: 9px; height: 9px; margin: 35px 0 0 24px; }

  .panel { width: 353px; flex: none; display: flex; flex-direction: column; }
  .tabs { height: 31px; display: flex; gap: 4px; padding-left: 3px; flex: none; font-size: 12.500px; position: relative; z-index: 1; }
  .tab { height: 29px; background: #d9d9d9; color: #858585; box-sizing: border-box; padding: 7px 8px 0; border-radius: 2px 2px 0 0; }
  .dm { width: 102px; }
  .insp { width: 68px; }
  .active { width: 96px; height: 31px; background: none; color: #0895d9; border-bottom: 3px solid #0895d9; }
  .body { flex: 1; border: 1px solid #808590; margin: -1px 0 0 1px; display: flex; flex-direction: column; min-height: 0; }
  .caption { height: 20px; flex: none; padding-left: 1px; color: #333; }
  .caption.mid { height: 25px; line-height: 25px; padding-left: 0; }
  .list { border: 1px solid #808590; background: #fff; box-sizing: border-box; flex: none; display: flex; padding: 1px; overflow: hidden; }
  .typelist { height: 259px; }
  .rows { width: 330px; flex: none; overflow: hidden; }
  .row { height: 20px; background: #0895d9; color: #fff; display: flex; align-items: center; padding-left: 3px; gap: 6px; box-sizing: border-box; }
  .row span { padding-top: 2px; }
  .row svg { width: 16px; height: 16px; }
  .track, .hscroll { background: repeating-conic-gradient(#fff 0 25%, #efefef 0 50%) 0 0 / 2px 2px; }
  .track { width: 16px; flex: none; display: flex; flex-direction: column; }
  .used { background: #eee; padding-left: 5px; }
  .used i { width: 6px; height: 100%; border-radius: 3px; background: #808080; }
  .ttop { height: 204px; }
  .presets { height: 127px; display: block; }
  .preset { height: 16px; line-height: 18px; padding-left: 4px; }
  .preset:nth-child(even) { background: #f4f4f4; }
  .layerlist { height: 380px; margin-top: 5px; }
  .layerlist .rows { height: 360px; }
  .tbot { height: 322px; margin-top: 54px; }
  .chip { width: 16px; height: 16px; background: #7094b4; border: 1px solid #7fa3c0; }
  .chip.vias { background: #20a090; border-color: #30b09c; }
  .chip.unrouted { background: #6c955c; border-color: #7ea860; }
  .chip.dim { background: #828f62; border-color: #99a068; }
  .chip.dark { background: radial-gradient(#114876 35%, #06223f 60%) 0 0 / 3px 3px; border-color: #0e4c80; }
  .chip.red { background: radial-gradient(#272650 35%, #08203f 60%) 0 0 / 4px 4px; border-color: #72365a; }
  .chip.green { background: radial-gradient(#12605e 35%, #06253d 60%) 0 0 / 3px 4px; border-color: #168276; }
  .foot { flex: 1; display: flex; justify-content: flex-end; align-items: flex-end; }
  .foot button { width: 49px; height: 26px; background: #fff; border: 1px solid #808080; border-radius: 4px; padding: 1px 0 0; }

  .work { flex: 1; display: flex; flex-direction: column; border-left: 4px solid #d9d9d9; min-width: 0; }
  .command { height: 34px; flex: none; display: flex; align-items: center; }
  .coord { width: 128px; padding: 2px 0 0 7px; line-height: 26px; }
  .input { flex: 1; height: 26px; margin: 0 -1px 0 0; box-sizing: border-box; border: 1px solid #999; background: #d3d3d3; color: #888; padding-left: 6px; line-height: 26px; }
  .board { width: 1449px; height: 826px; background: #000; }
  .screen .board { overflow: hidden; }
  .hscroll { height: 16px; display: flex; }
  .hscroll div { margin-left: 262px; width: 713px; background: #eee; padding-top: 5px; box-sizing: border-box; }
  .hscroll i { height: 6px; border-radius: 3px; background: #808080; }

  .status { height: 24px; flex: none; border-top: 1px solid #808080; display: flex; align-items: center; color: #333; }
  .status span { margin-left: -2px; padding-top: 2px; }
  .status i { width: 1px; height: 21px; background: #ccc; margin-left: auto; }
  .status b { width: 2px; height: 1px; background: #12b04a; margin-left: 4px; }

  footer { height: 16px; flex: none; background: #1e1e1e; display: flex; overflow: hidden; color: #fff; }
  .start { width: 42px; padding: 12px 0 0 9px; box-sizing: border-box; flex: none; }
  .start svg { width: 18px; height: 18px; }
  .search { width: 287px; height: 20px; background: #323232; border: 1px solid #555; box-sizing: border-box; flex: none; }
  .search svg { width: 286px; height: 16px; margin-top: -1px; }
  .task { width: 49.200px; flex: none; height: 16px; display: flex; justify-content: center; }
  .task svg { width: 24px; height: 24px; margin-top: 8px; }
  .task.live { background: #474747; width: 42px; margin-left: 3px; }
  .tray { margin-left: 348px; width: 348px; flex: none; }
  .tray svg { width: 340px; height: 16px; }
  .clock { line-height: 16px; margin-top: 3px; }
</style>
